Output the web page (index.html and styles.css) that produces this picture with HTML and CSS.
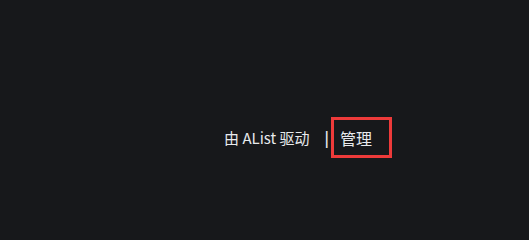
FILE: index.html
```html
<!DOCTYPE html>
<html lang="zh-CN">
<head>
<meta charset="utf-8">
<link rel="stylesheet" href="styles.css">
</head>
<body>
<footer class="footer">
  <a class="powered" href="#">由 AList 驱动</a>
  <span class="sep">|</span>
  <a class="manage" href="#">管理</a>
</footer>
</body>
</html>
```

FILE: styles.css
```css
html {
  background: #17181b;
}
body {
  margin: 0;
  font-family: "Noto Sans CJK SC", "Noto Sans", sans-serif;
  font-size: 15px;
  color: #e8eaed;
}
.footer {
  display: flex;
  justify-content: flex-end;
  align-items: center;
  padding-top: 117px;
  padding-right: 137px;
}
.footer a {
  color: #e8eaed;
  text-decoration: none;
}
.sep {
  margin: 0 2px 0 15px;
  font-weight: 600;
}
.manage {
  border: 3px solid #ee3a3a;
  padding: 7px 17px 5px 6px;
  font-size: 16px;
  line-height: 23px;
}
```
